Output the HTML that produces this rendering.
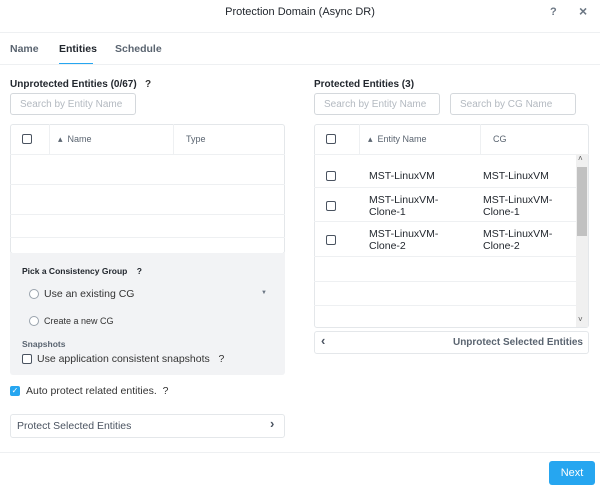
<!DOCTYPE html>
<html><head><style>
*{box-sizing:border-box;margin:0;padding:0}
body{width:600px;height:490px;background:#fff;font-family:"Liberation Sans",sans-serif;color:#333;position:relative;overflow:hidden}
.a{position:absolute;white-space:nowrap}
.t{font-size:10.5px;color:#22272e}
.box{border:1px solid #e4e7ea;border-radius:3px;background:#fff}
.inp{border:1px solid #d4d8dc;border-radius:3px;font-size:10px;color:#b3b9c0;padding:5px 9px;overflow:hidden}
.cb{width:10px;height:10px;border:1px solid #4a5360;border-radius:2px;background:#fff}
.line{height:1px;background:#eef0f2}
.rd{width:10px;height:10px;border:1px solid #9aa3ad;border-radius:50%;background:#fff}
</style></head><body>
<div class="a" style="left:0;right:0;top:6px;text-align:center;font-size:11px;color:#22272e">Protection Domain (Async DR)</div>
<div class="a" style="left:550px;top:6px;font-size:11px;font-weight:bold;color:#6b7683">?</div>
<div class="a" style="left:579px;top:3px;font-size:14px;font-weight:bold;color:#6b7683">×</div>
<div class="a line" style="left:0;right:0;top:32px"></div>
<div class="a" style="left:10px;top:43px;font-size:10.5px;font-weight:bold;color:#5a6470">Name</div>
<div class="a" style="left:59px;top:43px;font-size:10.5px;font-weight:bold;color:#22272e">Entities</div>
<div class="a" style="left:115px;top:43px;font-size:10.5px;font-weight:bold;color:#5a6470">Schedule</div>
<div class="a" style="left:59px;top:63px;width:34px;height:2px;background:#26a6f0"></div>
<div class="a line" style="left:0;right:0;top:64px"></div>

<div class="a" style="left:10px;top:79px;font-size:10px;font-weight:bold;color:#22272e">Unprotected Entities (0/67)</div>
<div class="a" style="left:145px;top:79px;font-size:10px;font-weight:bold">?</div>
<div class="a inp" style="left:10px;top:93px;width:126px;height:22px">Search by Entity Name</div>
<div class="a box" style="left:10px;top:124px;width:275px;height:130px"></div>
<div class="a cb" style="left:22px;top:134px"></div>
<div class="a" style="left:49px;top:124px;width:1px;height:30px;background:#eef0f2"></div>
<div class="a" style="left:173px;top:124px;width:1px;height:30px;background:#eef0f2"></div>
<div class="a" style="left:58px;top:134px;font-size:9px;color:#5a6470">▴&nbsp; Name</div>
<div class="a" style="left:186px;top:134px;font-size:9px;color:#5a6470">Type</div>
<div class="a line" style="left:10px;width:275px;top:154px"></div>
<div class="a line" style="left:10px;width:275px;top:184px"></div>
<div class="a line" style="left:10px;width:275px;top:214px"></div>
<div class="a line" style="left:10px;width:275px;top:237px"></div>
<div class="a" style="left:10px;top:253px;width:275px;height:122px;background:#f2f3f5;border-radius:0 0 3px 3px"></div>
<div class="a" style="left:22px;top:266px;font-size:8.5px;font-weight:bold;color:#22272e">Pick a Consistency Group &nbsp;&nbsp; ?</div>
<div class="a rd" style="left:29px;top:289px"></div>
<div class="a" style="left:44px;top:288px;font-size:10.5px">Use an existing CG</div>
<div class="a" style="left:261px;top:290px;font-size:6px;color:#6b7683">▼</div>
<div class="a rd" style="left:29px;top:316px"></div>
<div class="a" style="left:44px;top:316px;font-size:9px">Create a new CG</div>
<div class="a" style="left:22px;top:339px;font-size:8.5px;font-weight:bold;color:#5a6470">Snapshots</div>
<div class="a cb" style="left:22px;top:354px"></div>
<div class="a" style="left:37px;top:353px;font-size:10.5px">Use application consistent snapshots &nbsp;&nbsp;?</div>
<div class="a" style="left:10px;top:386px;width:10px;height:10px;border-radius:2px;background:#26a6f0;color:#fff;font-size:8px;line-height:10px;text-align:center">✓</div>
<div class="a" style="left:26px;top:385px;font-size:10.5px">Auto protect related entities. &nbsp;?</div>
<div class="a box" style="left:10px;top:414px;width:275px;height:24px"></div>
<div class="a" style="left:17px;top:420px;font-size:10.5px;color:#4a5360">Protect Selected Entities</div>
<div class="a" style="left:270px;top:416px;font-size:13px;font-weight:bold;color:#4a5360">›</div>

<div class="a" style="left:314px;top:79px;font-size:10px;font-weight:bold;color:#22272e">Protected Entities (3)</div>
<div class="a inp" style="left:314px;top:93px;width:126px;height:22px">Search by Entity Name</div>
<div class="a inp" style="left:450px;top:93px;width:126px;height:22px">Search by CG Name</div>
<div class="a box" style="left:314px;top:124px;width:275px;height:204px"></div>
<div class="a cb" style="left:326px;top:134px"></div>
<div class="a" style="left:359px;top:124px;width:1px;height:30px;background:#eef0f2"></div>
<div class="a" style="left:480px;top:124px;width:1px;height:30px;background:#eef0f2"></div>
<div class="a" style="left:368px;top:134px;font-size:9px;color:#5a6470">▴&nbsp; Entity Name</div>
<div class="a" style="left:493px;top:134px;font-size:9px;color:#5a6470">CG</div>
<div class="a line" style="left:314px;width:275px;top:154px"></div>
<div class="a" style="left:576px;top:154px;width:12px;height:173px;background:#f0f0f0"></div>
<div class="a" style="left:577px;top:167px;width:10px;height:69px;background:#c1c1c1"></div>
<div class="a" style="left:578px;top:154px;font-size:8px;color:#555">˄</div>
<div class="a" style="left:578px;top:315px;font-size:8px;color:#555">˅</div>
<div class="a cb" style="left:326px;top:171px"></div>
<div class="a t" style="left:369px;top:170px">MST-LinuxVM</div>
<div class="a t" style="left:483px;top:170px">MST-LinuxVM</div>
<div class="a line" style="left:314px;width:262px;top:187px"></div>
<div class="a cb" style="left:326px;top:201px"></div>
<div class="a t" style="left:369px;top:194px;line-height:12px">MST-LinuxVM-<br>Clone-1</div>
<div class="a t" style="left:483px;top:194px;line-height:12px">MST-LinuxVM-<br>Clone-1</div>
<div class="a line" style="left:314px;width:262px;top:221px"></div>
<div class="a cb" style="left:326px;top:235px"></div>
<div class="a t" style="left:369px;top:228px;line-height:12px">MST-LinuxVM-<br>Clone-2</div>
<div class="a t" style="left:483px;top:228px;line-height:12px">MST-LinuxVM-<br>Clone-2</div>
<div class="a line" style="left:314px;width:262px;top:256px"></div>
<div class="a line" style="left:314px;width:262px;top:281px"></div>
<div class="a line" style="left:314px;width:262px;top:305px"></div>
<div class="a box" style="left:314px;top:331px;width:275px;height:23px"></div>
<div class="a" style="left:321px;top:333px;font-size:13px;font-weight:bold;color:#4a5360">‹</div>
<div class="a" style="right:17px;top:337px;font-size:10px;font-weight:bold;color:#5a6470">Unprotect Selected Entities</div>

<div class="a line" style="left:0;right:0;top:452px"></div>
<div class="a" style="left:549px;top:461px;width:46px;height:24px;background:#26a6f0;border-radius:3px;color:#fff;font-size:11px;text-align:center;line-height:24px">Next</div>
</body></html>
